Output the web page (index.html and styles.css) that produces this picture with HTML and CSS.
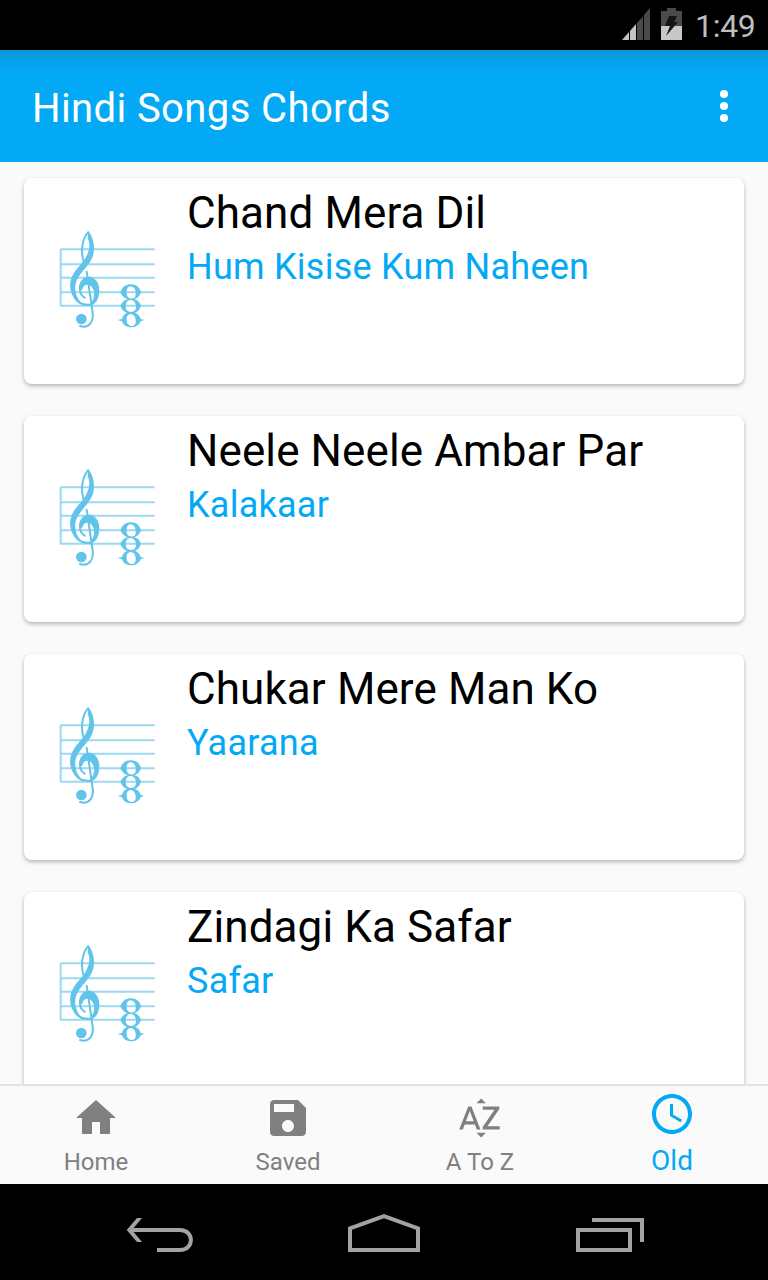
FILE: index.html
```html
<!DOCTYPE html>
<html lang="en">
<head>
  <meta charset="utf-8">
  <title>Hindi Songs Chords</title>
  <link rel="stylesheet" href="styles.css">
</head>
<body>
<svg class="defs">
  <symbol id="clef" viewBox="0 0 390 390">
    <g fill="none" stroke="#9bd9f0" stroke-width="6">
      <path d="M62 103H344M62 148H344M62 188H344M62 232H344M62 272H344M62 101V274"/>
    </g>
    <g fill="none" stroke="#62c4ea" stroke-linecap="round">
      <path stroke-width="6" d="M132 142C122 115 124 75 144 52"/>
      <path stroke-width="6" d="M140 170L157 285C164 322 146 341 120 333"/>
      <path stroke-width="6" d="M98 235C108 262 126 272 150 269C165 265 175 250 175 226"/>
      <path stroke-width="6" d="M121 220C118 234 124 242 134 248"/>
    </g>
    <g fill="#62c4ea">
      <path d="M145 47C163 70 167 106 156 130C144 158 112 178 106 210C104 228 108 246 122 262C99 252 87 228 91 202C97 170 119 155 132 136C147 114 153 91 143 70Z"/>
      <path d="M117 225C115 200 130 184 149 185C171 188 182 214 176 234C172 253 164 263 150 269C163 252 165 236 160 224C152 204 130 204 127 224Z"/>
      <circle cx="124" cy="312" r="16"/>
    </g>
    <g fill="#62c4ea" fill-rule="evenodd">
      <path d="M241 232C248 214 258 208 273 208C289 208 299 216 303 232C298 247 288 254 273 254C257 254 247 246 241 232ZM260 232C259 244 266 251 276 251C286 250 288 243 287 232C286 220 280 214 271 214C263 215 259 222 260 232Z"/>
      <path d="M241 272C248 258 257 251 273 251C289 251 298 258 303 272C298 288 288 295 273 295C256 295 246 287 241 272ZM257 274C257 285 264 291 273 291C284 291 289 283 288 274C287 263 281 255 271 255C262 255 257 264 257 274Z"/>
      <path d="M232 315L246 312C249 299 259 292 273 292C287 292 299 300 302 312L313 315L302 319C297 331 286 337 273 337C259 337 250 330 246 319ZM260 315C260 326 266 333 276 333C286 332 288 324 287 315C286 303 280 297 271 297C263 298 259 306 260 315Z"/>
    </g>
  </symbol>
</svg>

<div class="status">
  <svg width="28" height="32" viewBox="0 0 28 32">
    <path fill="#c4c4c4" d="M0 32L7 24V32ZM8 23L14 16V32H8Z"/>
    <path fill="#4a4a4a" d="M15 15L21 8.500V32H15ZM22 7L28 0V32H22Z"/>
  </svg>
  <svg class="battery" width="21" height="32" viewBox="0 0 21 32">
    <path fill="#4a4a4a" d="M6 0H15V3H21V18H0V3H6Z"/>
    <path fill="#c8c8c8" d="M0 18H21V32H0Z"/>
    <path fill="#151515" d="M8 8H16L13 14H17L5 28L9 18H4Z"/>
  </svg>
  <span class="time">1:49</span>
</div>

<div class="toolbar">
  <h1 class="title">Hindi Songs Chords</h1>
  <div class="menu"><i></i><i></i><i></i></div>
</div>

<div class="list">
  <div class="card">
    <svg class="pic"><use href="#clef"/></svg>
    <div class="info">
      <div class="song">Chand Mera Dil</div>
      <div class="movie">Hum Kisise Kum Naheen</div>
    </div>
  </div>
  <div class="card">
    <svg class="pic"><use href="#clef"/></svg>
    <div class="info">
      <div class="song">Neele Neele Ambar Par</div>
      <div class="movie">Kalakaar</div>
    </div>
  </div>
  <div class="card">
    <svg class="pic"><use href="#clef"/></svg>
    <div class="info">
      <div class="song">Chukar Mere Man Ko</div>
      <div class="movie">Yaarana</div>
    </div>
  </div>
  <div class="card">
    <svg class="pic"><use href="#clef"/></svg>
    <div class="info">
      <div class="song">Zindagi Ka Safar</div>
      <div class="movie">Safar</div>
    </div>
  </div>
</div>

<div class="tabs">
  <div class="tab">
    <svg width="48" height="48" viewBox="0 0 24 24"><path fill="#808080" d="M10 20v-6h4v6h5v-8h3L12 3 2 12h3v8z"/></svg>
    <span>Home</span>
  </div>
  <div class="tab">
    <svg width="48" height="48" viewBox="0 0 24 24"><path fill="#808080" d="M17 3H5c-1.110 0-2 .900-2 2v14c0 1.100.890 2 2 2h14c1.100 0 2-.900 2-2V7l-4-4zm-5 16c-1.660 0-3-1.340-3-3s1.340-3 3-3 3 1.340 3 3-1.340 3-3 3zm3-10H5V5h10v4z"/></svg>
    <span>Saved</span>
  </div>
  <div class="tab">
    <svg width="48" height="48" viewBox="0 0 24 24"><path fill="#808080" d="M14.940 4.660h-4.720l2.360-2.360zm-4.690 14.710h4.660l-2.330 2.330zM6.100 6.270L1.600 17.730h1.840l.920-2.450h5.110l.920 2.450h1.840L7.740 6.270H6.100zm-1.130 7.370l1.940-5.180 1.940 5.180H4.970zm10.760 2.500h6.120v1.590h-8.530v-1.290l5.920-8.560h-5.880v-1.600h8.300v1.260l-5.930 8.600z"/></svg>
    <span>A To Z</span>
  </div>
  <div class="tab active">
    <svg width="48" height="48" viewBox="0 0 24 24"><path fill="#03a9f4" d="M11.990 2C6.470 2 2 6.480 2 12s4.470 10 9.990 10C17.520 22 22 17.520 22 12S17.520 2 11.990 2zM12 20c-4.420 0-8-3.580-8-8s3.580-8 8-8 8 3.580 8 8-3.580 8-8 8zm.5-13H11v6l5.250 3.150.75-1.230-4.500-2.670z"/></svg>
    <span>Old</span>
  </div>
</div>

<div class="navbar">
  <svg width="768" height="96" viewBox="0 0 768 96" fill="none" stroke="#a3a3a3" stroke-width="4">
    <path d="M130 46H180C194.500 46 194.500 66 180 66H157"/>
    <path fill="#a3a3a3" stroke="none" d="M137 34H142L132 46L142 58H137L126.700 46Z"/>
    <path d="M350 44.400L384 32.100L418 44.400V66H350Z"/>
    <path d="M578 46H630V66H578ZM592 36H642V58"/>
  </svg>
</div>
</body>
</html>
```
FILE: styles.css
```css
* {
  box-sizing: border-box;
}
body {
  margin: 0;
  width: 768px;
  height: 1280px;
  display: flex;
  flex-direction: column;
  overflow: hidden;
  background: #fafafa;
  font-family: Roboto, sans-serif;
}
svg {
  display: block;
  overflow: visible;
}
.defs {
  position: absolute;
  width: 0;
  height: 0;
}
.status {
  height: 50px;
  flex: none;
  display: flex;
  justify-content: flex-end;
  align-items: flex-start;
  padding: 8px 12px 0 0;
  background: #000;
}
.battery {
  margin: 0 13px 0 11px;
}
.time {
  width: 61px;
  font-size: 32px;
  line-height: 36px;
  letter-spacing: -0.3px;
  color: #bebebe;
}
.toolbar {
  height: 112px;
  flex: none;
  display: flex;
  justify-content: space-between;
  align-items: center;
  padding: 0 40px 0 32px;
  background: linear-gradient(#0b96d9, #08a0e7 8px, #03a9f4 22px);
}
.title {
  margin: 4px 0 0;
  font-size: 40px;
  font-weight: normal;
  letter-spacing: 0.4px;
  color: #fff;
}
.menu {
  display: flex;
  flex-direction: column;
  gap: 4px;
}
.menu i {
  width: 8px;
  height: 8px;
  border-radius: 50%;
  background: #fff;
}
.list {
  flex: 1;
  min-height: 0;
  overflow: hidden;
  padding: 16px 24px 0;
}
.card {
  display: flex;
  height: 206px;
  margin-bottom: 32px;
  padding-left: 16px;
  border-radius: 8px;
  background: #fff;
  box-shadow: 0 2px 4px rgba(0, 0, 0, 0.28);
}
.pic {
  width: 130px;
  height: 130px;
  margin: 37px 17px 0 0;
}
.info {
  padding-top: 9px;
  white-space: nowrap;
}
.song {
  font-size: 44px;
  line-height: 52px;
  letter-spacing: 0.1px;
  color: #000;
}
.movie {
  font-size: 36px;
  line-height: 56px;
  letter-spacing: 0.25px;
  color: #03a9f4;
}
.tabs {
  height: 100px;
  flex: none;
  display: flex;
  border-top: 2px solid #e2e2e2;
}
.tab {
  flex: 1;
  display: flex;
  flex-direction: column;
  align-items: center;
  padding-top: 8px;
  font-size: 24px;
  line-height: 40px;
  color: #808080;
}
.active {
  padding-top: 4px;
  font-size: 28px;
  line-height: 46px;
  color: #03a9f4;
}
.navbar {
  height: 96px;
  flex: none;
  background: #000;
}
```
